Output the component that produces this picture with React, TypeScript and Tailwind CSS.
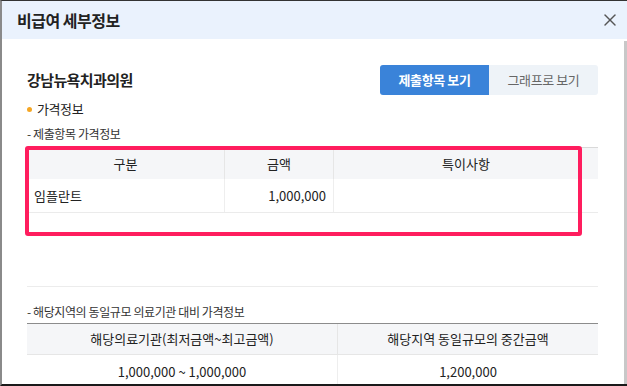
import { X } from 'lucide-react'

const FONT = "font-['Noto_Sans_CJK_KR','Noto_Sans',sans-serif]"

function SectionTitle({ children }: { children: string }) {
  return <p className="text-[12px] leading-[18px] tracking-[-0.4px] text-[#333]">{children}</p>
}

export default function App() {
  return (
    <div
      className={`${FONT} relative flex h-[386px] w-[627px] flex-col overflow-hidden border-t border-b-2 border-l-2 border-t-[#333] border-b-[#1a1a1a] border-l-[#8a8a8a] bg-white`}
    >
      <div className="flex h-[38px] shrink-0 items-center justify-between bg-[#eaf2fd] pl-[15px] pr-[7px]">
        <h1 className="text-[16px] font-semibold tracking-[-0.5px] text-[#222]">비급여 세부정보</h1>
        <X size={20} strokeWidth={1.7} className="text-[#555]" />
      </div>

      <div className="flex min-h-0 flex-1">
        <div className="flex-1 pl-[25px] pr-[26px] pt-[26px]">
          <div className="flex h-[30px] items-center justify-between">
            <h2 className="text-[15px] font-bold tracking-[-0.6px] text-[#222]">강남뉴욕치과의원</h2>
            <div className="flex h-[30px]">
              <button className="w-[109px] rounded-l-[3px] bg-[#3a83d9] text-[13px] font-bold tracking-[-0.4px] text-white">
                제출항목 보기
              </button>
              <button className="w-[109px] rounded-r-[3px] bg-[#eef3f8] text-[13px] tracking-[-0.4px] text-[#666]">
                그래프로 보기
              </button>
            </div>
          </div>

          <div className="mt-[5px] flex h-[18px] items-center gap-[5px]">
            <span className="h-[5px] w-[5px] rounded-full bg-[#f5a623]" />
            <span className="text-[13px] tracking-[-0.4px] text-[#222]">가격정보</span>
          </div>

          <div className="mt-[7px]">
            <SectionTitle>- 제출항목 가격정보</SectionTitle>
          </div>

          <div className="mt-[4px] border-t border-[#d9d9d9] text-[13px] text-[#222]">
            <div className="grid h-[31px] grid-cols-[197px_109px_1fr] bg-[#f5f6f8]">
              <div className="flex items-center justify-center">구분</div>
              <div className="flex items-center justify-center border-l border-[#e6e6e6]">금액</div>
              <div className="flex items-center justify-center border-l border-[#e6e6e6]">특이사항</div>
            </div>
            <div className="grid h-[34px] grid-cols-[197px_109px_1fr] border-b border-[#ebebeb]">
              <div className="flex items-center pl-[7px]">임플란트</div>
              <div className="flex items-center justify-end border-l border-[#eeeeee] pr-[7px]">1,000,000</div>
              <div className="border-l border-[#eeeeee]" />
            </div>
          </div>

          <div className="mt-[73px] border-t border-[#ececec]" />

          <div className="mt-[16px]">
            <SectionTitle>- 해당지역의 동일규모 의료기관 대비 가격정보</SectionTitle>
          </div>

          <div className="mt-[2px] border-t border-[#8c8c8c] text-[13px] text-[#222]">
            <div className="grid h-[30px] grid-cols-[310px_1fr] bg-[#f5f6f8]">
              <div className="flex items-center justify-center">해당의료기관(최저금액~최고금액)</div>
              <div className="flex items-center justify-center border-l border-[#e6e6e6]">해당지역 동일규모의 중간금액</div>
            </div>
            <div className="grid h-[34px] grid-cols-[310px_1fr] border-t border-[#e6e6e6]">
              <div className="flex items-center justify-center">1,000,000 ~ 1,000,000</div>
              <div className="flex items-center justify-center border-l border-[#eeeeee]">1,200,000</div>
            </div>
          </div>
        </div>
        <div className="mt-[2px] w-[3px] bg-[#c8c8c8]" />
      </div>

      {/* highlight annotation */}
      <div className="pointer-events-none absolute left-[23px] top-[145px] h-[90px] w-[557px] rounded-[3px] border-4 border-[#ff1d5e]" />
    </div>
  )
}
